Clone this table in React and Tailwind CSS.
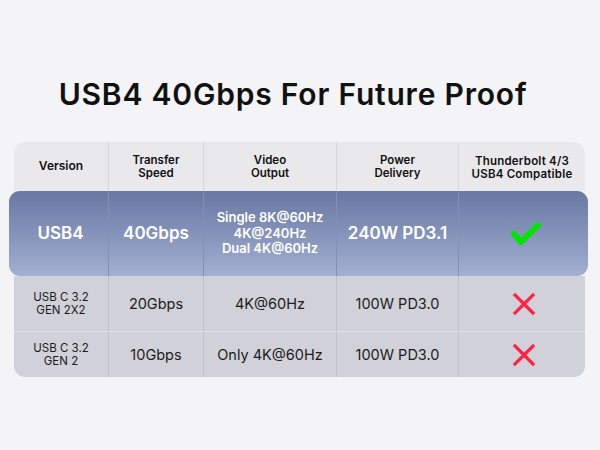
import React from 'react';

const font = { fontFamily: 'Inter, "Open Sans", sans-serif' };

function Check() {
  return (
    <svg width="34" height="28" viewBox="0 0 34 28">
      <path d="M5 14 L12 22 L29 5" fill="none" stroke="#00e400" strokeWidth="6" strokeLinecap="round" strokeLinejoin="round" />
    </svg>
  );
}

function Cross() {
  return (
    <svg width="24" height="24" viewBox="0 0 24 24">
      <path d="M3 3 L21 21 M21 3 L3 21" fill="none" stroke="#ff2244" strokeWidth="3.2" strokeLinecap="square" />
    </svg>
  );
}

const cell = 'flex items-center justify-center text-center';

export default function App() {
  return (
    <div className="w-[600px] h-[450px] bg-[#f4f4f6] overflow-hidden" style={font}>
      <h1 className="pt-[74px] pr-[14px] text-center text-[30px] leading-[40px] font-semibold text-[#111] tracking-[0.8px]">
        USB4 40Gbps For Future Proof
      </h1>

      <div className="mt-[28px] mx-[14px] w-[571px]">
        {/* Header */}
        <div className="grid grid-cols-[94px_95px_133px_122px_127px] h-[49px] bg-[#e9e9ec] rounded-t-[11px] text-[11.5px] leading-[12.5px] font-semibold text-[#111]">
          <div className={`${cell} text-[12px]`}>Version</div>
          <div className={`${cell} border-l border-[#d6d6db]`}>Transfer<br />Speed</div>
          <div className={`${cell} border-l border-[#d6d6db]`}>Video<br />Output</div>
          <div className={`${cell} border-l border-[#d6d6db]`}>Power<br />Delivery</div>
          <div className={`${cell} border-l border-[#d6d6db] pt-[2px] tracking-[0.2px]`}>Thunderbolt 4/3<br />USB4 Compatible</div>
        </div>

        {/* Highlighted row */}
        <div className="ml-[-5px] mr-[-3px] grid grid-cols-[99px_95px_133px_122px_130px] h-[85px] rounded-[11px] bg-gradient-to-b from-[#6878a2] to-[#a3afd2] text-white font-semibold">
          <div className={`${cell} text-[17px] pl-[4px]`}>USB4</div>
          <div className={`${cell} text-[17px] border-l border-[#8390b3]`}>40Gbps</div>
          <div className={`${cell} text-[13px] leading-[15.5px] border-l border-[#8390b3]`}>Single 8K@60Hz<br />4K@240Hz<br />Dual 4K@60Hz</div>
          <div className={`${cell} text-[17px] border-l border-[#8390b3]`}>240W PD3.1</div>
          <div className={`${cell} border-l border-[#8390b3] pl-[4px]`}><Check /></div>
        </div>

        {/* Other rows */}
        <div className="bg-[#d1d1d9] rounded-b-[11px] text-[#1c1c1c]">
          <div className="grid grid-cols-[94px_95px_133px_122px_127px] h-[56px] border-b border-[#e0e0e6]">
            <div className={`${cell} text-[11.5px] leading-[12.5px]`}>USB C 3.2<br />GEN 2X2</div>
            <div className={`${cell} text-[14.5px] border-l border-[#c0c0ca]`}>20Gbps</div>
            <div className={`${cell} text-[14.5px] border-l border-[#c0c0ca]`}>4K@60Hz</div>
            <div className={`${cell} text-[14.5px] border-l border-[#c0c0ca]`}>100W PD3.0</div>
            <div className={`${cell} border-l border-[#c0c0ca] pl-[3px]`}><Cross /></div>
          </div>
          <div className="grid grid-cols-[94px_95px_133px_122px_127px] h-[45px]">
            <div className={`${cell} text-[11.5px] leading-[12.5px]`}>USB C 3.2<br />GEN 2</div>
            <div className={`${cell} text-[14.5px] border-l border-[#c0c0ca]`}>10Gbps</div>
            <div className={`${cell} text-[14.5px] border-l border-[#c0c0ca]`}>Only 4K@60Hz</div>
            <div className={`${cell} text-[14.5px] border-l border-[#c0c0ca]`}>100W PD3.0</div>
            <div className={`${cell} border-l border-[#c0c0ca] pl-[3px]`}><Cross /></div>
          </div>
        </div>
      </div>
    </div>
  );
}
